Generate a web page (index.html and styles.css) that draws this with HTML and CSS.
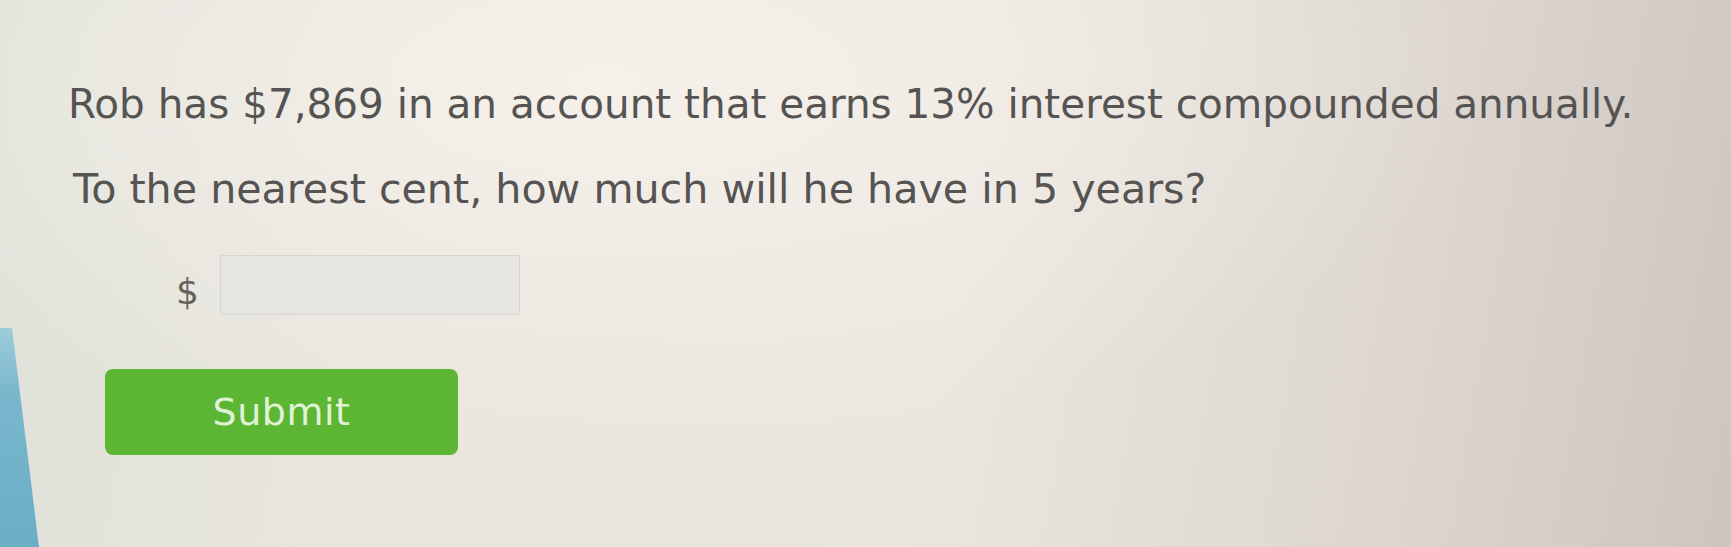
FILE: index.html
```html
<!DOCTYPE html>
<html lang="en">
<head>
<meta charset="utf-8">
<title>Compound interest</title>
<link rel="stylesheet" href="styles.css">
</head>
<body>
<div class="screen">
  <main class="question">
    <p class="line line-one">Rob has $7,869 in an account that earns 13% interest compounded annually.</p>
    <p class="line line-two">To the nearest cent, how much will he have in 5 years?</p>
    <div class="answer">
      <span class="currency">$</span>
      <input class="answer-box" type="text" aria-label="answer">
    </div>
    <button class="submit" type="button">Submit</button>
  </main>
</div>
</body>
</html>
```
FILE: styles.css
```css
html, body {
  margin: 0;
  padding: 0;
  height: 100%;
}
body {
  font-family: "DejaVu Sans", Verdana, sans-serif;
  color: #565452;
  background:
    radial-gradient(ellipse at 35% 15%, rgba(247, 242, 236, 0.85) 0%, rgba(240, 235, 229, 0) 55%),
    linear-gradient(100deg, #dfe1d9 0%, #e9e6df 25%, #ebe6e0 55%, #ddd6d1 80%, #ccc5c0 100%);
  overflow: hidden;
}
.screen {
  position: relative;
  height: 547px;
}
.screen::before {
  content: "";
  position: absolute;
  left: 0;
  top: 0;
  width: 50px;
  height: 547px;
  background: linear-gradient(180deg, #a4cfda 58%, #79b7cd 72%, #6aaec6 100%);
  clip-path: polygon(0 328px, 12px 328px, 39px 547px, 0 547px);
}
.question {
  padding: 80px 0 0 68px;
}
.line {
  margin: 0;
  line-height: 48px;
  white-space: nowrap;
}
.line-one {
  font-size: 40.5px;
}
.line-two {
  font-size: 41.2px;
  margin-top: 37px;
  padding-left: 5px;
}
.answer {
  display: flex;
  align-items: flex-end;
  margin-top: 42px;
  padding-left: 108px;
}
.currency {
  font-size: 36px;
  line-height: 36px;
  margin-right: 21px;
  margin-bottom: 5px;
  color: #65625e;
}
.answer-box {
  width: 300px;
  height: 60px;
  box-sizing: border-box;
  border: 1px solid #d6d5cf;
  background: #e5e6e0;
  border-radius: 1px;
  margin: 0;
}
.submit {
  display: block;
  margin: 54px 0 0 37px;
  width: 353px;
  height: 86px;
  border: none;
  border-radius: 8px;
  background: #5cb533;
  color: #e2f2d6;
  font-family: "DejaVu Sans", Verdana, sans-serif;
  font-size: 38px;
  letter-spacing: 0.5px;
  padding: 0;
}
```
